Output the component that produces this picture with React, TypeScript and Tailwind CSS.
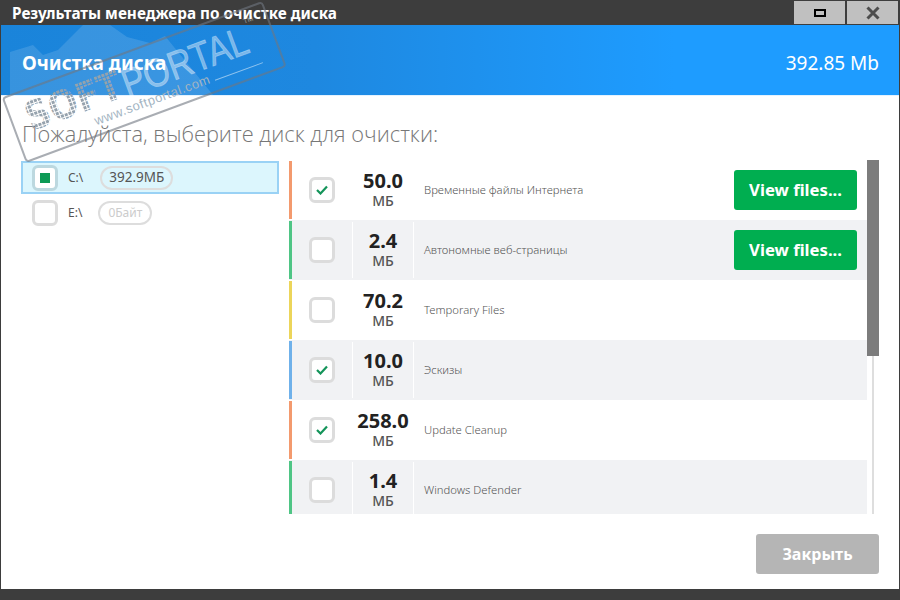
const sans = "font-['Noto_Sans','Open_Sans',sans-serif]";

type Row = { strip: string; checked: boolean; size: string; label: string; files?: boolean };

const rows: Row[] = [
  { strip: "bg-[#f39a6e]", checked: true, size: "50.0", label: "Временные файлы Интернета", files: true },
  { strip: "bg-[#4fc585]", checked: false, size: "2.4", label: "Автономные веб-страницы", files: true },
  { strip: "bg-[#ecd55a]", checked: false, size: "70.2", label: "Temporary Files" },
  { strip: "bg-[#6fb1ea]", checked: true, size: "10.0", label: "Эскизы" },
  { strip: "bg-[#f39a6e]", checked: true, size: "258.0", label: "Update Cleanup" },
  { strip: "bg-[#4fc585]", checked: false, size: "1.4", label: "Windows Defender" },
];

function Check({ checked }: { checked: boolean }) {
  return (
    <div className="flex h-[26px] w-[26px] items-center justify-center rounded-[6px] border-[3px] border-[#dcdcdc] bg-white">
      {checked && (
        <svg width="12" height="10" viewBox="0 0 12 10" fill="none">
          <path d="M1 5l3.5 3.5L11 1.5" stroke="#14945a" strokeWidth="2.2" />
        </svg>
      )}
    </div>
  );
}

// softportal stamp lying over the window
function Watermark() {
  return (
    <svg className="pointer-events-none absolute left-0 top-0" width="300" height="170" viewBox="0 0 300 170">
      <defs>
        <pattern id="dots" width="4" height="4" patternUnits="userSpaceOnUse">
          <rect width="3" height="3" fill="#95a2ad" />
        </pattern>
        <clipPath id="head">
          <rect x="0" y="25" width="300" height="70" />
        </clipPath>
      </defs>
      <path
        clipPath="url(#head)"
        d="M10 52 L33 45 L43 55 L58 50 L83 25 L110 25 L127 37 L150 43 L165 36 L213 95 L10 95 Z"
        fill="#ffffff"
        fillOpacity="0.13"
      />
      <g transform="translate(3 98) rotate(-20.3)">
        <rect x="0" y="0" width="276" height="68" rx="3" fill="none" stroke="#6f7780" strokeOpacity="0.6" strokeWidth="2" />
        <text
          x="15"
          y="41"
          textLength={100}
          lengthAdjust="spacingAndGlyphs"
          fontFamily="'DejaVu Sans'"
          fontWeight="700"
          fontSize="40"
          fill="url(#dots)"
        >
          SOFT
        </text>
        <text
          x="117"
          y="43"
          textLength={132}
          lengthAdjust="spacingAndGlyphs"
          fontFamily="'Liberation Sans'"
          fontSize="40"
          fill="#ffffff"
          fillOpacity="0.42"
          stroke="#ffffff"
          strokeOpacity="0.3"
          strokeWidth="0.8"
        >
          PORTAL
        </text>
        <text x="78" y="58" textLength={122} fontFamily="'Liberation Sans'" fontSize="13" fill="#a3b4c2">
          www.softportal.com
        </text>
        <line x1="205" y1="57" x2="256" y2="57" stroke="#ffffff" strokeOpacity="0.5" />
        <text x="252" y="14" fontFamily="'Liberation Sans'" fontSize="7" fill="#ffffff" fillOpacity="0.5">
          TM
        </text>
      </g>
    </svg>
  );
}

export default function App() {
  return (
    <div className={`relative flex h-[600px] w-[900px] flex-col overflow-hidden bg-[#3d3d3d] ${sans}`}>
      <div className="flex h-[25px] shrink-0 items-center pl-3 pr-[2px]">
        <span className="pt-px text-[15.3px] font-bold text-white">Результаты менеджера по очистке диска</span>
        <div className="ml-auto flex h-[24px] gap-[2px] self-start pt-[1px]">
          <div className="flex w-[51px] items-center justify-center bg-[#c0c0c0]">
            <div className="h-[8px] w-[12px] border-2 border-black" />
          </div>
          <div className="flex w-[51px] items-center justify-center bg-[#c0c0c0]">
            <svg width="14" height="14" viewBox="0 0 14 14">
              <path d="M1.5 1.5l11 11M12.5 1.5l-11 11" stroke="#4d4d4d" strokeWidth="3" />
            </svg>
          </div>
        </div>
      </div>

      <div className="mx-[1px] flex h-[564px] shrink-0 flex-col bg-white">
        <div className="flex h-[71px] shrink-0 items-center justify-between border-b border-[#e3f2ff] bg-[linear-gradient(90deg,#1a84da,#1e88e0_35%,#1e9cff_75%)] pl-[21px] pr-[20px] pt-[6px]">
          <span className="text-[19px] font-bold text-white">Очистка диска</span>
          <span className="text-[19px] text-white">392.85 Mb</span>
        </div>

        <div className="pl-[21px] pt-[24px] font-['Open_Sans',sans-serif] text-[21.8px] font-light leading-[28px] text-[#777777]">
          Пожалуйста, выберите диск для очистки:
        </div>

        <div className="mt-[12px] flex min-h-0 flex-1">
          <div className="ml-5 w-[258px] shrink-0 pt-px">
            <div className="flex h-[33px] items-center border-2 border-[#9ad2f5] bg-[#dcf6fd] pl-[9px]">
              <div className="flex h-[26px] w-[26px] items-center justify-center rounded-[6px] border-[3px] border-[#bcd8df] bg-white">
                <div className="h-[10px] w-[10px] bg-[#0d9a55]" />
              </div>
              <span className="ml-[10px] text-xs text-[#555555]">C:\</span>
              <span className="ml-[17px] flex h-[24px] w-[73px] items-center justify-center rounded-full border-2 border-[#dddddd] text-[13.5px] text-[#555555]">
                392.9МБ
              </span>
            </div>
            <div className="mt-[5px] flex h-[28px] items-center pl-[11px]">
              <Check checked={false} />
              <span className="ml-[10px] text-xs text-[#555555]">E:\</span>
              <span className="ml-[16px] flex h-[24px] w-[54px] items-center justify-center rounded-full border-2 border-[#dddddd] text-xs text-[#cccccc]">
                0Байт
              </span>
            </div>
          </div>

          <div className="ml-[10px] flex h-[354px] w-[590px] shrink-0">
            <div className="h-full w-[578px] overflow-hidden">
              {rows.map((r, i) => (
                <div key={r.label} className={`flex h-[60px] items-stretch ${i % 2 ? "bg-[#f1f2f4]" : "bg-white"}`}>
                  <div className={`my-px w-[3px] ${r.strip}`} />
                  <div className="flex w-[60px] items-center justify-center pr-[1px]">
                    <Check checked={r.checked} />
                  </div>
                  <div className={`my-[2px] flex w-[62px] flex-col items-center justify-center border-x ${i % 2 ? "border-white" : "border-transparent"}`}>
                    <span className="text-xl font-bold leading-[22px] text-[#222222]">{r.size}</span>
                    <span className="text-sm font-medium leading-[18px] text-[#555555]">МБ</span>
                  </div>
                  <div className="ml-[10px] flex flex-1 items-center text-[11.3px] font-light text-[#555555]">{r.label}</div>
                  {r.files && (
                    <div className="flex items-center pr-[10px]">
                      <button className="h-[40px] w-[123px] rounded-[3px] bg-[#00ae50] text-[16.7px] font-bold text-white">View files...</button>
                    </div>
                  )}
                </div>
              ))}
            </div>
            <div className="relative h-full w-[12px]">
              <div className="absolute bottom-0 left-[5px] top-0 w-[2px] bg-[#dedede]" />
              <div className="absolute left-0 top-0 h-[196px] w-[12px] bg-[#7c7c7c]" />
            </div>
          </div>
        </div>

        <div className="flex h-[74px] shrink-0 items-start justify-end pr-[20px] pt-[19px]">
          <button className="h-[40px] w-[123px] rounded-[3px] bg-[#b5b5b5] text-base font-bold text-white">Закрыть</button>
        </div>
      </div>
      <Watermark />
    </div>
  );
}
